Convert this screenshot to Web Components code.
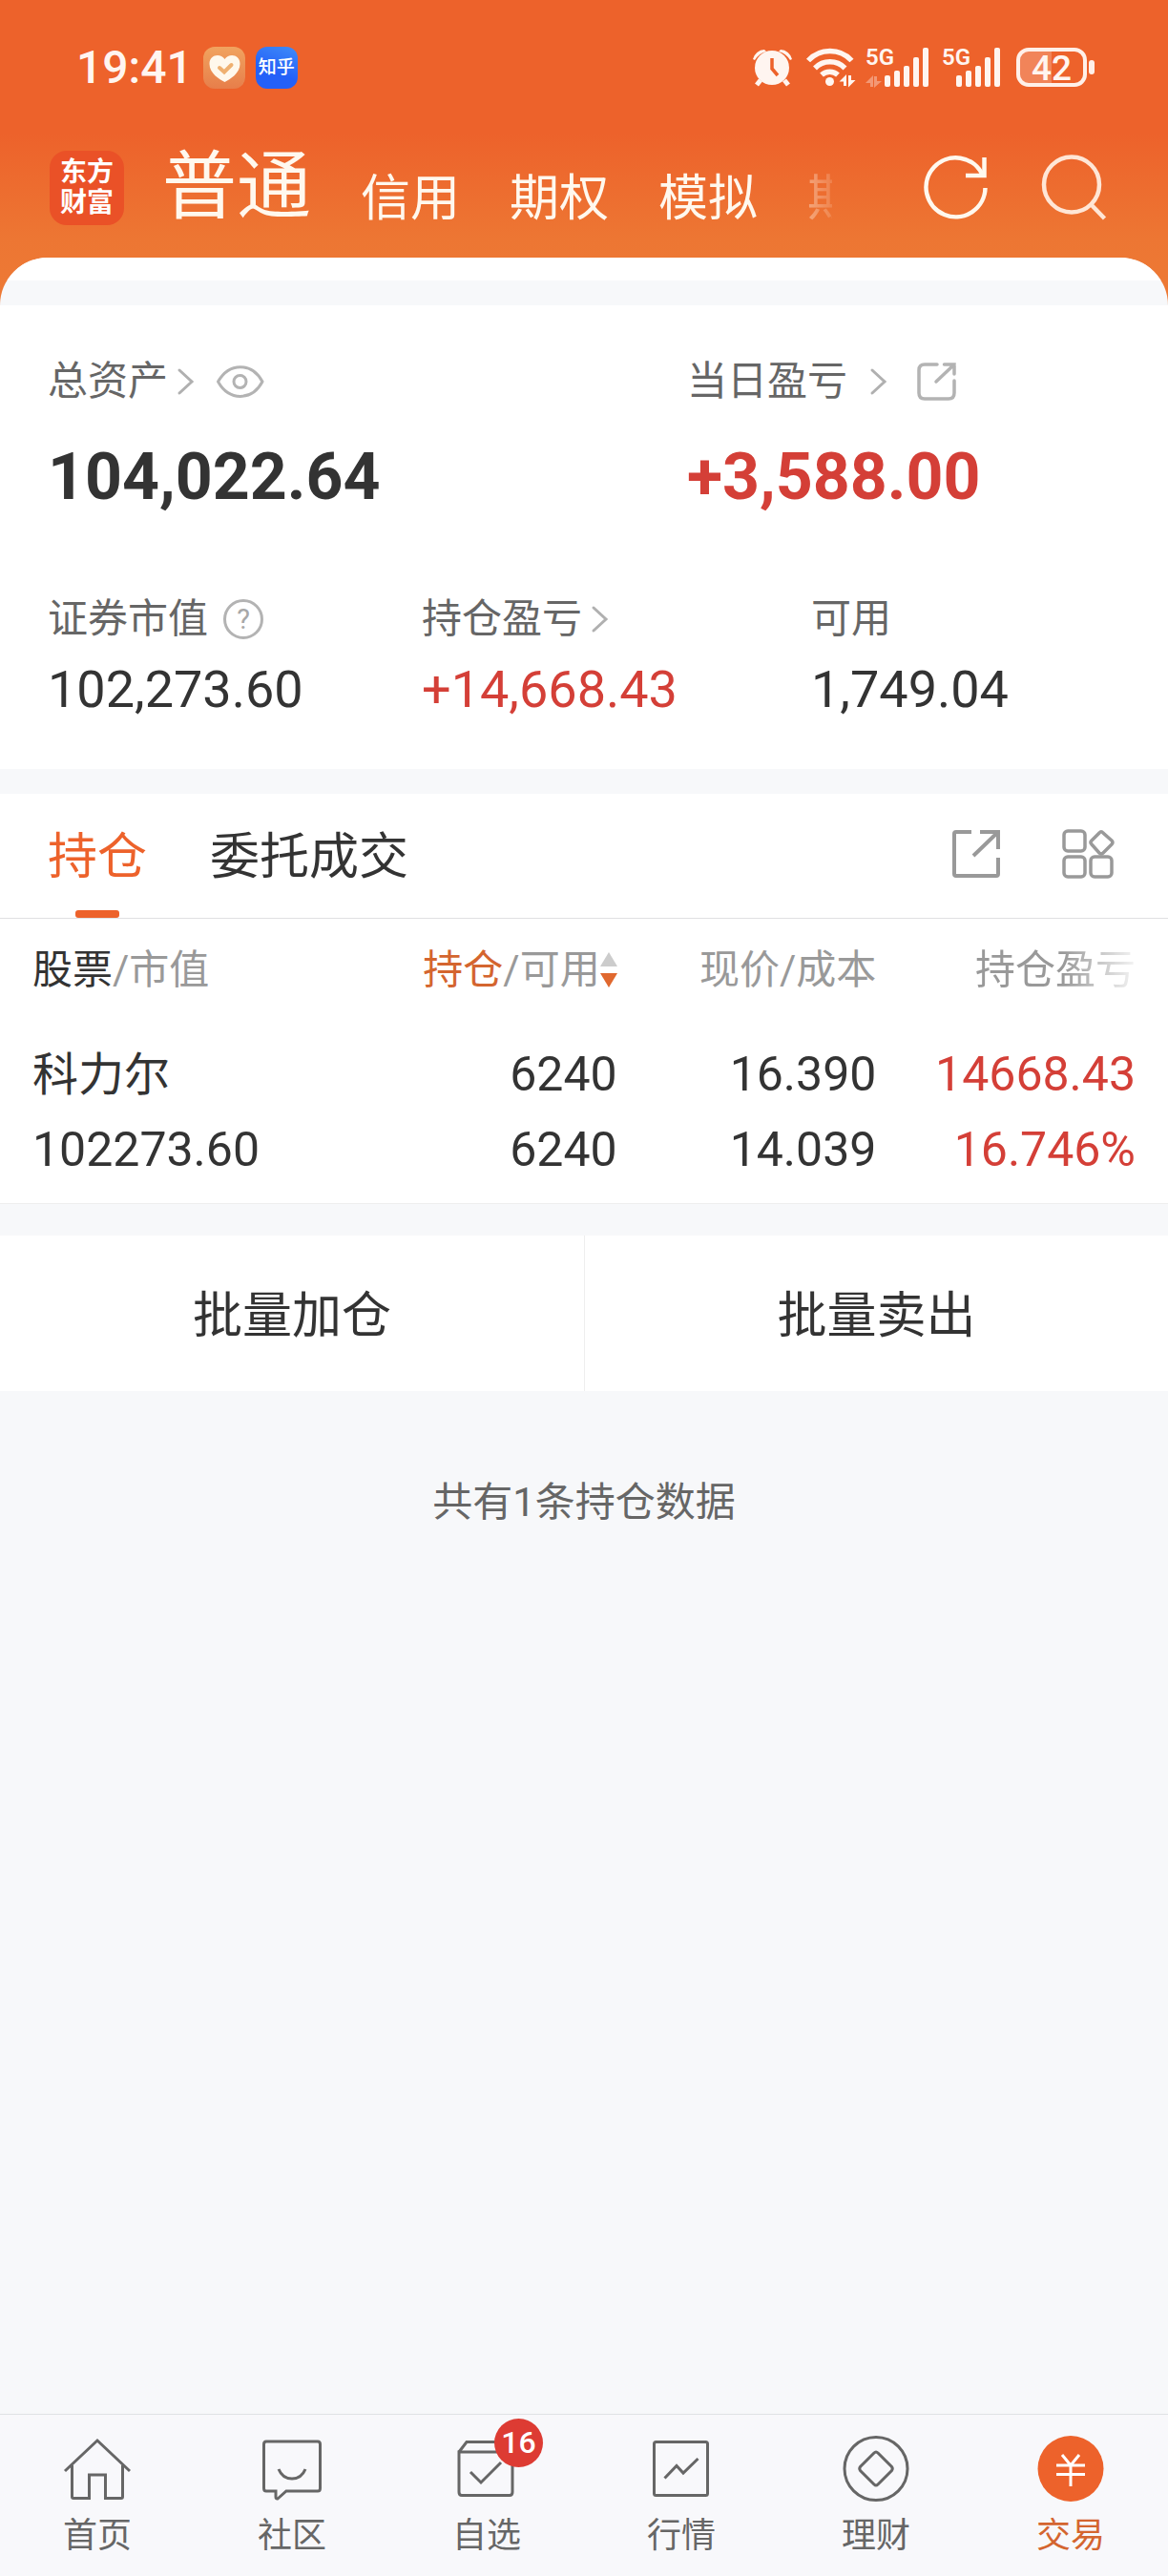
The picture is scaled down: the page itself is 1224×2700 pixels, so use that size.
<!DOCTYPE html>
<html lang="zh-CN">
<head>
  <meta charset="UTF-8">
  <meta name="viewport" content="width=device-width, initial-scale=1.0">
  <title>交易</title>
  <style>
    :root {
      --orange: #ed622b;
      --red: #d43f37;
      --ink: #333333;
      --label: #666666;
      --muted: #999999;
      --line: #e0e0e2;
      --page: #f7f8fa;
    }
    body {
      margin: 0;
      font-family: Roboto, "Noto Sans CJK SC", sans-serif;
      color: var(--ink);
      background: var(--page);
    }
  </style>
</head>
<body>
  <trade-app>
    <status-bar slot="top"></status-bar>
    <account-nav slot="top"></account-nav>
    <asset-summary></asset-summary>
    <holding-panel></holding-panel>
    <batch-actions></batch-actions>
    <empty-note>共有1条持仓数据</empty-note>
    <bottom-nav slot="bottom"></bottom-nav>
  </trade-app>

  <script>
    // Every icon is drawn in its own pixel box: [width, height, markup]
    const ICONS = {
      alarm: [44, 40, `
        <g fill="#fff5f0"><circle cx="20" cy="20" r="18"/>
        <path d="M0 11A13 13 0 0 1 12 1L14 3A20 20 0 0 0 2 12ZM41 11A13 13 0 0 0 29 1L27 3A20 20 0 0 1 39 12Z"/></g>
        <path d="M8 33L4 38M33 33L37 38" stroke="#fff5f0" stroke-width="5"/>
        <path d="M20 10V21L26 28" fill="none" stroke="#ed622b" stroke-width="3.5"/>`],
      wifi: [50, 42, `
        <g fill="none" stroke="#fff5f0" stroke-width="5.5">
        <path d="M2 13.5A31 31 0 0 1 47.5 13.5"/><path d="M9 21.5A22 22 0 0 1 40.5 21.5"/><path d="M16 28.5A12.5 12.5 0 0 1 33 28.5"/></g>
        <circle cx="24.500" cy="35.500" r="4.500" fill="#fff5f0"/>
        <path d="M34.500 35.500L42 28V40H39V35.500ZM51.500 34L44 41.500V29H47V34Z" fill="#fff5f0"/>`],
      signalData: [68, 42, `
        <text x="0" y="18" font-size="24" font-weight="600" fill="#fff5f0">5G</text>
        <path d="M0 37L8 29V41H5V37ZM17 35L9 42V30H12V35Z" fill="#fff" opacity="0.35"/>
        <g fill="#fff5f0"><rect x="20" y="29" width="6" height="12" rx="2"/><rect x="30" y="24" width="6" height="17" rx="2"/><rect x="40" y="19" width="6" height="22" rx="2"/><rect x="50" y="10" width="6" height="31" rx="2"/><rect x="60" y="0" width="6" height="41" rx="2"/></g>`],
      signal: [66, 42, `
        <text x="0" y="18" font-size="24" font-weight="600" fill="#fff5f0">5G</text>
        <g fill="#fff5f0"><rect x="15" y="29" width="6" height="12" rx="2"/><rect x="25" y="24" width="6" height="17" rx="2"/><rect x="35" y="19" width="6" height="22" rx="2"/><rect x="45" y="10" width="6" height="31" rx="2"/><rect x="55" y="0" width="6" height="41" rx="2"/></g>`],
      battery: [82, 42, `
        <path d="M12 4H37V37H12Q4 37 4 29V12Q4 4 12 4Z" fill="#fff" opacity="0.22"/>
        <rect x="2" y="2" width="70" height="37" rx="11" fill="none" stroke="#fff0e9" stroke-width="4"/>
        <rect x="76" y="13" width="6" height="15" rx="3" fill="#fff0e9"/>
        <text x="37" y="34" font-size="37" font-weight="500" text-anchor="middle" fill="#fff5f0">42</text>`],
      health: [44, 44, `
        <defs><linearGradient id="g" x1="0" y1="0" x2="0" y2="1"><stop offset="0" stop-color="#f1a35f"/><stop offset="1" stop-color="#e77e4a"/></linearGradient></defs>
        <rect width="44" height="44" rx="12" fill="url(#g)"/>
        <path d="M22.500 37C17 34 6.500 28 6.500 18C6.500 8 18 6.500 22.500 13C27 6.500 38.500 8 38.500 18C38.500 28 28 34 22.500 37Z" fill="#fff8ec"/>
        <path d="M17 22L22 26.500L29.500 19" fill="none" stroke="#efb070" stroke-width="4" stroke-linecap="round"/>`],
      refresh: [68, 68, `
        <g fill="none" stroke="#fff8ee" stroke-width="4.5"><path d="M64.500 35A31 31 0 1 1 61.500 21"/><path d="M63.500 3V22H44"/></g>`],
      search: [68, 68, `
        <g fill="none" stroke="#ffe6d6" stroke-width="4.5"><circle cx="31" cy="31.500" r="29"/><path d="M51.500 52.500L65.500 67"/></g>`],
      chevron: [17, 28, `<path d="M2 2L15 14L2 26" fill="none" stroke="#b0b0b0" stroke-width="3" stroke-linecap="round"/>`],
      eye: [50, 34, `
        <g fill="none" stroke="#b3b3b3" stroke-width="3"><path d="M1.500 17C13 -3.500 37 -3.500 48 17C37 37.500 13 37.500 1.500 17Z" stroke-linejoin="round"/><circle cx="24.500" cy="17" r="6.500"/></g>`],
      share: [42, 40, `
        <g fill="none" stroke="#b3b3b3" stroke-width="3.5" stroke-linecap="round"><path d="M21 2H8Q2 2 2 8V32Q2 38 8 38H33Q39 38 39 32V19"/><path d="M28.500 2H39V12M39 2L20 20"/></g>`],
      help: [42, 42, `
        <circle cx="21" cy="21" r="19.500" fill="none" stroke="#b3b3b3" stroke-width="3"/>
        <text x="21" y="31" font-size="29" text-anchor="middle" fill="#a8a8a8">?</text>`],
      shareBig: [50, 50, `
        <g fill="none" stroke="#999" stroke-width="4"><path d="M20 2H4Q2 2 2 4V46Q2 48 4 48H46Q48 48 48 46V29"/><path d="M29 2H48V20M48 2L22 27"/></g>`],
      grid: [56, 54, `
        <g fill="none" stroke="#999" stroke-width="3.5"><rect x="2" y="3" width="22" height="21" rx="4"/><rect x="2" y="30" width="22" height="21" rx="4"/><rect x="30" y="30" width="22" height="21" rx="4"/>
        <path d="M39 5Q41 2.500 43 5L52 13Q54 15 52 17L43 26Q41 28 39 26L31 17Q29 15 31 13Z"/></g>`],
      sort: [18, 38, `<path d="M9 0L18 15H0Z" fill="#ccc"/><path d="M0 22H18L9 37Z" fill="#e0682f"/>`],
      home: [72, 72, `
        <g fill="none" stroke="#666" stroke-width="3"><path d="M2 39L36 7L70 39"/><path d="M9.500 33V66Q9.500 67.500 11 67.500H27.500V43H44.500V67.500H61Q62.500 67.500 62.500 66V33"/></g>`],
      chat: [72, 72, `
        <g fill="none" stroke="#666" stroke-width="3"><path d="M9 8H63Q65.500 8 65.500 11V57Q65.500 60 63 60H30L21 68Q19 68.500 19 66V60H9Q6.500 60 6.500 57V11Q6.500 8 9 8Z"/><path d="M22 37Q26 47 36 47Q46 47 50 37"/></g>`],
      box: [72, 72, `
        <g fill="none" stroke="#666" stroke-width="3"><path d="M7 19V61Q7 64.500 10 64.500H60Q63 64.500 63 61V19Z"/><path d="M7 19L15 8.500H55L63 19"/><path d="M19 40L30 51L51 30"/></g>`],
      chart: [72, 72, `
        <g fill="none" stroke="#666" stroke-width="3"><rect x="7.500" y="8.500" width="56" height="56" rx="2"/><path d="M18.500 46.500L31 33.500L38 41L53.500 26"/></g>`],
      coin: [72, 72, `
        <g fill="none" stroke="#666" stroke-width="3"><circle cx="36" cy="36.500" r="33"/><path d="M34 20Q36 18 38 20L52.500 34.500Q54 36.500 52.500 38.500L38 53Q36 55 34 53L19.500 38.500Q18 36.500 19.500 34.500Z"/></g>`],
      yuan: [72, 72, `
        <circle cx="36" cy="36.500" r="34.500" fill="#ed622b"/>
        <path d="M27 22L36 33L45 22M21 33H51M21 42.500H51M36 33V55" fill="none" stroke="#fff" stroke-width="3"/>`]
    };

    class UiIcon extends HTMLElement {
      connectedCallback() {
        const [w, h, body] = ICONS[this.getAttribute('name')];
        this.attachShadow({ mode: 'open' });
        this.shadowRoot.innerHTML = `
          <style>
            :host { display: inline-block; flex: none; line-height: 0; }
            svg { display: block; overflow: visible; }
          </style>
          <svg width="${w}" height="${h}" viewBox="0 0 ${w} ${h}" aria-hidden="true">${body}</svg>
        `;
      }
    }
    customElements.define('ui-icon', UiIcon);

    class TradeApp extends HTMLElement {
      connectedCallback() {
        this.attachShadow({ mode: 'open' });
        this.shadowRoot.innerHTML = `
          <style>
            :host {
              display: flex;
              flex-direction: column;
              min-height: 100vh;
            }
            .hero {
              background: linear-gradient(#ed622b 140px, #ed7633 250px, #ed7a35);
            }
            .sheet-top {
              height: 26px;
              border-top: 24px solid white;
              border-radius: 52px 52px 0 0;
              background: var(--page);
            }
            .sheet {
              overflow: hidden;
              border-radius: 52px 52px 0 0;
            }
            .sheet .sheet-top { border-radius: 0; }
            main {
              flex: 1;
            }
          </style>
          <div class="hero">
            <slot name="top"></slot>
            <div class="sheet"><div class="sheet-top"></div></div>
          </div>
          <main><slot></slot></main>
          <slot name="bottom"></slot>
        `;
      }
    }
    customElements.define('trade-app', TradeApp);

    class StatusBar extends HTMLElement {
      connectedCallback() {
        this.attachShadow({ mode: 'open' });
        this.shadowRoot.innerHTML = `
          <style>
            :host {
              display: flex;
              justify-content: space-between;
              align-items: center;
              padding: 49px 77px 0 80px;
              height: 44px;
              color: #fff5f0;
            }
            .left, .right {
              display: flex;
              align-items: center;
            }
            .left { gap: 11px; }
            .right { gap: 12px; }
            time {
              font-size: 48px;
              line-height: 44px;
              font-weight: 500;
            }
            .zhihu {
              width: 44px;
              border-radius: 12px;
              background: linear-gradient(200deg, #3f8cf8, #2460f8 60%);
              color: white;
              font-size: 19px;
              line-height: 44px;
              font-weight: 500;
              text-align: center;
            }
          </style>
          <div class="left">
            <time>19:41</time>
            <ui-icon name="health"></ui-icon>
            <span class="zhihu">知乎</span>
          </div>
          <div class="right">
            <ui-icon name="alarm"></ui-icon>
            <ui-icon name="wifi"></ui-icon>
            <ui-icon name="signalData"></ui-icon>
            <ui-icon name="signal"></ui-icon>
            <ui-icon name="battery"></ui-icon>
          </div>
        `;
      }
    }
    customElements.define('status-bar', StatusBar);

    class AccountNav extends HTMLElement {
      connectedCallback() {
        this.attachShadow({ mode: 'open' });
        this.shadowRoot.innerHTML = `
          <style>
            :host {
              display: flex;
              align-items: center;
              padding: 52px 64px 21px 52px;
            }
            .logo {
              box-sizing: border-box;
              width: 78px;
              height: 78px;
              padding: 7px 0;
              border-radius: 18px;
              background: #ea5127;
              color: white;
              font-size: 28px;
              line-height: 32px;
              font-weight: 700;
              text-align: center;
              text-decoration: none;
            }
            nav {
              flex: 1;
              min-width: 0;
              display: flex;
              align-items: flex-end;
              gap: 52px;
              height: 104px;
              margin: 0 96px 0 40px;
              overflow: hidden;
              -webkit-mask-image: linear-gradient(to left, rgba(0, 0, 0, 0.15), rgba(0, 0, 0, 0.4) 26px, black 52px);
              mask-image: linear-gradient(to left, rgba(0, 0, 0, 0.15), rgba(0, 0, 0, 0.4) 26px, black 52px);
            }
            nav a {
              flex: none;
              color: #fff8ee;
              font-size: 52px;
              line-height: 80px;
              text-decoration: none;
            }
            nav a.active {
              font-size: 78px;
              line-height: 104px;
            }
            .tools {
              display: flex;
              gap: 56px;
            }
            button {
              padding: 0;
              border: 0;
              background: none;
            }
          </style>
          <a class="logo" href="#">东方<br>财富</a>
          <nav>
            <a class="active" href="#">普通</a>
            <a href="#">信用</a>
            <a href="#">期权</a>
            <a href="#">模拟</a>
            <a href="#">期</a>
          </nav>
          <div class="tools">
            <button aria-label="刷新"><ui-icon name="refresh"></ui-icon></button>
            <button aria-label="搜索"><ui-icon name="search"></ui-icon></button>
          </div>
        `;
      }
    }
    customElements.define('account-nav', AccountNav);

    // One label with its figure; icons go in the default slot
    class AssetFigure extends HTMLElement {
      connectedCallback() {
        this.attachShadow({ mode: 'open' });
        this.shadowRoot.innerHTML = `
          <style>
            :host { display: block; }
            .label {
              display: flex;
              align-items: center;
              height: 60px;
              color: var(--label);
              font-size: 42px;
              line-height: 60px;
              white-space: nowrap;
            }
            .value {
              font-size: 54px;
              line-height: 64px;
              padding-top: 12px;
            }
            :host([big]) .value {
              font-size: 68px;
              line-height: 80px;
              font-weight: 700;
              padding-top: 30px;
            }
            :host([up]) .value { color: var(--red); }
            ::slotted(ui-icon) { margin-left: 16px; }
            ::slotted(ui-icon[near]) { margin-left: 10px; }
            ::slotted(ui-icon[far]) { margin-left: 24px; }
            ::slotted(ui-icon[wide]) { margin-left: 32px; }
          </style>
          <div class="label">${this.getAttribute('label')}<slot></slot></div>
          <div class="value">${this.getAttribute('value')}</div>
        `;
      }
    }
    customElements.define('asset-figure', AssetFigure);

    class AssetSummary extends HTMLElement {
      connectedCallback() {
        this.attachShadow({ mode: 'open' });
        this.shadowRoot.innerHTML = `
          <style>
            :host {
              display: block;
              background: white;
              padding: 50px 50px 51px;
            }
            .row { display: grid; }
            .totals {
              grid-template-columns: 670fr 454fr;
              margin-bottom: 79px;
            }
            .parts { grid-template-columns: 392fr 408fr 324fr; }
          </style>
          <div class="row totals">
            <asset-figure big label="总资产" value="104,022.64">
              <ui-icon near name="chevron"></ui-icon>
              <ui-icon far name="eye"></ui-icon>
            </asset-figure>
            <asset-figure big up label="当日盈亏" value="+3,588.00">
              <ui-icon far name="chevron"></ui-icon>
              <ui-icon wide name="share"></ui-icon>
            </asset-figure>
          </div>
          <div class="row parts">
            <asset-figure label="证券市值" value="102,273.60">
              <ui-icon name="help"></ui-icon>
            </asset-figure>
            <asset-figure up label="持仓盈亏" value="+14,668.43">
              <ui-icon near name="chevron"></ui-icon>
            </asset-figure>
            <asset-figure label="可用" value="1,749.04"></asset-figure>
          </div>
        `;
      }
    }
    customElements.define('asset-summary', AssetSummary);

    class HoldingPanel extends HTMLElement {
      connectedCallback() {
        this.attachShadow({ mode: 'open' });
        this.shadowRoot.innerHTML = `
          <style>
            :host {
              display: block;
              margin-top: 26px;
              background: white;
              border-bottom: 1px solid #eeeeee;
            }
            .tabs {
              display: flex;
              align-items: center;
              gap: 66px;
              padding: 0 55px 0 50px;
              border-bottom: 1px solid var(--line);
            }
            button {
              padding: 0;
              border: 0;
              background: none;
              color: inherit;
              font: inherit;
            }
            .tab {
              position: relative;
              height: 130px;
              padding-top: 4px;
              font-size: 52px;
              line-height: 126px;
            }
            .tab.active { color: var(--orange); }
            .tab.active::after {
              content: "";
              position: absolute;
              left: 50%;
              bottom: 0;
              width: 46px;
              height: 8px;
              margin-left: -23px;
              border-radius: 3px;
              background: var(--orange);
            }
            .tools {
              display: flex;
              align-items: center;
              gap: 65px;
              margin-left: auto;
            }
            .table-wrap { padding: 0 34px 16px; }
            table {
              width: 100%;
              table-layout: fixed;
              border-collapse: collapse;
            }
            th, td {
              padding: 0;
              text-align: right;
              font-weight: 400;
              white-space: nowrap;
            }
            th {
              height: 104px;
              padding-top: 2px;
              color: var(--muted);
              font-size: 42px;
              line-height: 60px;
            }
            th:first-child, td:first-child { text-align: left; }
            th b {
              font-weight: 400;
              color: var(--ink);
            }
            th b.on { color: #d4652f; }
            .sortable {
              display: flex;
              justify-content: flex-end;
              align-items: center;
            }
            .fade {
              -webkit-mask-image: linear-gradient(to left, rgba(0, 0, 0, 0.1), black 76px);
              mask-image: linear-gradient(to left, rgba(0, 0, 0, 0.1), black 76px);
            }
            td {
              padding-top: 18px;
              font-size: 50px;
              line-height: 79px;
            }
            .name { font-size: 48px; }
            .up { color: var(--red); }
          </style>
          <div class="tabs">
            <button class="tab active">持仓</button>
            <button class="tab">委托成交</button>
            <div class="tools">
              <button aria-label="分享"><ui-icon name="shareBig"></ui-icon></button>
              <button aria-label="更多"><ui-icon name="grid"></ui-icon></button>
            </div>
          </div>
          <div class="table-wrap">
            <table>
              <colgroup><col style="width: 30%"><col style="width: 23%"><col style="width: 23.5%"><col style="width: 23.5%"></colgroup>
              <thead>
                <tr>
                  <th><b>股票</b>/市值</th>
                  <th><span class="sortable"><b class="on">持仓</b>/可用<ui-icon name="sort"></ui-icon></span></th>
                  <th>现价/成本</th>
                  <th><div class="fade">持仓盈亏</div></th>
                </tr>
              </thead>
              <tbody>
                <tr>
                  <td><div class="name">科力尔</div><div>102273.60</div></td>
                  <td><div>6240</div><div>6240</div></td>
                  <td><div>16.390</div><div>14.039</div></td>
                  <td class="up"><div>14668.43</div><div>16.746%</div></td>
                </tr>
              </tbody>
            </table>
          </div>
        `;
      }
    }
    customElements.define('holding-panel', HoldingPanel);

    class BatchActions extends HTMLElement {
      connectedCallback() {
        this.attachShadow({ mode: 'open' });
        this.shadowRoot.innerHTML = `
          <style>
            :host {
              display: grid;
              grid-template-columns: 1fr 1fr;
              margin-top: 33px;
              background: white;
            }
            button {
              height: 163px;
              padding: 0 0 4px;
              border: 0;
              background: none;
              color: var(--ink);
              font: inherit;
              font-size: 52px;
            }
            button + button { border-left: 1px solid #eeeeee; }
          </style>
          <button>批量加仓</button>
          <button>批量卖出</button>
        `;
      }
    }
    customElements.define('batch-actions', BatchActions);

    class EmptyNote extends HTMLElement {
      connectedCallback() {
        this.attachShadow({ mode: 'open' });
        this.shadowRoot.innerHTML = `
          <style>
            :host {
              display: block;
              padding: 87px 0;
              color: var(--label);
              font-size: 42px;
              line-height: 60px;
              text-align: center;
            }
          </style>
          <slot></slot>
        `;
      }
    }
    customElements.define('empty-note', EmptyNote);

    class BottomNav extends HTMLElement {
      connectedCallback() {
        const items = [
          ['home', '首页'],
          ['chat', '社区'],
          ['box', '自选', 16],
          ['chart', '行情'],
          ['coin', '理财'],
          ['yuan', '交易']
        ];
        this.attachShadow({ mode: 'open' });
        this.shadowRoot.innerHTML = `
          <style>
            :host {
              display: block;
              background: #f8f8fb;
              border-top: 1px solid #dfe2e5;
            }
            nav { display: flex; }
            a {
              flex: 1;
              display: flex;
              flex-direction: column;
              align-items: center;
              padding: 20px 0 16px;
              color: var(--label);
              font-size: 36px;
              line-height: 52px;
              text-decoration: none;
            }
            a.active { color: #d4652f; }
            .icon {
              position: relative;
              display: flex;
              margin-bottom: 9px;
            }
            .badge {
              position: absolute;
              left: 44px;
              top: -16px;
              width: 51px;
              height: 51px;
              border-radius: 50%;
              background: #dd3b33;
              color: white;
              font-size: 32px;
              line-height: 51px;
              font-weight: 500;
              text-align: center;
            }
          </style>
          <nav>
            ${items.map(([icon, text, badge]) => `
              <a href="#" class="${icon === 'yuan' ? 'active' : ''}">
                <span class="icon"><ui-icon name="${icon}"></ui-icon>${badge ? `<span class="badge">${badge}</span>` : ''}</span>
                ${text}
              </a>
            `).join('')}
          </nav>
        `;
      }
    }
    customElements.define('bottom-nav', BottomNav);
  </script>
</body>
</html>
